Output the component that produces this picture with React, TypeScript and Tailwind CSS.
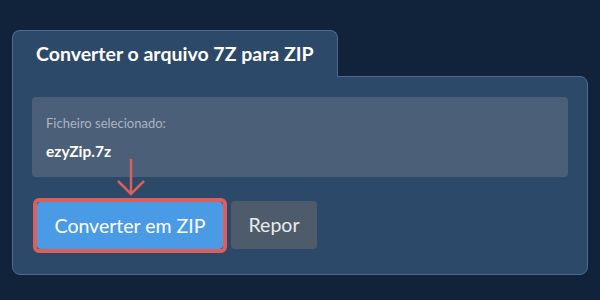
export default function App() {
  return (
    <div className="min-h-[300px] w-[600px] bg-[#11233a] px-3 pt-[30px] font-['Lato',sans-serif]">
      <div className="flex flex-col">
        <div className="relative z-10 -mb-px w-fit rounded-t-lg border border-b-0 border-[#4f6a8a] bg-[#2d4969] px-[23px] pt-[10px] pb-[10px]">
          <h1 className="text-[19.5px] leading-[26px] font-bold text-white">
            Converter o arquivo 7Z para ZIP
          </h1>
        </div>
        <div className="relative rounded-tr-lg rounded-b-lg border border-[#4f6a8a] bg-[#2d4969] px-[19px] pt-5 pb-[21px]">
          <div className="rounded bg-[#4b5f78] px-[14px] pt-[17px] pb-[16px]">
            <div className="text-[13px] leading-[18px] text-[#aab5c3]">Ficheiro selecionado:</div>
            <div className="mt-[9px] text-[15.5px] leading-[20px] font-bold text-white">ezyZip.7z</div>
          </div>
          <div className="mt-[21px] flex items-start gap-1">
            <div className="ml-px rounded-md border-4 border-[#db5f5a]">
              <button
                type="button"
                className="h-[47px] w-[186px] rounded-sm bg-[#4a9be6] text-[19.5px] text-white"
              >
                Converter em ZIP
              </button>
            </div>
            <button
              type="button"
              className="mt-[3px] h-[48px] w-[86px] rounded bg-[#4e5b6a] text-[19.5px] text-[#e8ebef]"
            >
              Repor
            </button>
          </div>
          <svg
            className="absolute left-[103px] top-[82px]"
            width="30"
            height="37"
            viewBox="0 0 30 37"
            fill="none"
            stroke="#db5f5a"
            strokeWidth="2.5"
          >
            <path d="M15 0V35" />
            <path d="M2 22L15 35L28 22" />
          </svg>
        </div>
      </div>
    </div>
  );
}
